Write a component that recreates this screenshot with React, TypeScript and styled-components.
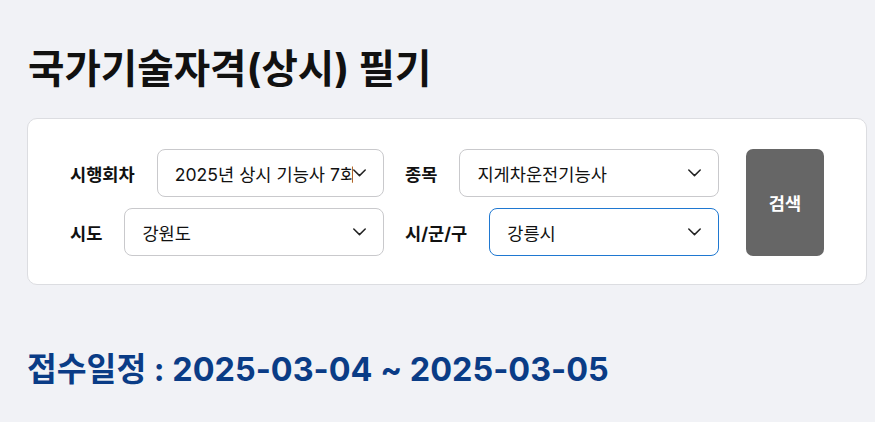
import React from "react";
import styled, { createGlobalStyle } from "styled-components";

const GlobalStyle = createGlobalStyle`
  html, body { margin: 0; padding: 0; background: #f1f2f6; }
  body { font-family: Inter, "Noto Sans CJK KR", sans-serif; color: #111; }
  * { box-sizing: border-box; }
`;

const Page = styled.main`
  padding: 43px 9px 0 27px;
`;

const Title = styled.h1`
  margin: 0 0 0 1px;
  font-size: 39.6px;
  line-height: 52px;
  font-weight: 700;
  color: #111;
  letter-spacing: 0;
`;

const Card = styled.section`
  margin-top: 23px;
  width: 840px;
  background: #fff;
  border: 1px solid #dcdde1;
  border-radius: 10px;
  padding: 30px 41px 28px 42px;
  display: flex;
  align-items: stretch;
  gap: 27px;
`;

const Fields = styled.div`
  display: grid;
  grid-template-columns: 314px 314px;
  column-gap: 21px;
  row-gap: 11px;
`;

const Field = styled.div`
  display: flex;
  align-items: center;
  gap: 22px;
`;

const Label = styled.span`
  font-size: 17.6px;
  font-weight: 700;
  color: #111;
  white-space: nowrap;
`;

const SelectBox = styled.div<{ $focused?: boolean }>`
  flex: 1;
  min-width: 0;
  height: 48px;
  display: flex;
  align-items: center;
  padding: 0 17px 0 17px;
  background: #fff;
  border: 1px solid ${(p) => (p.$focused ? "#1f78d1" : "#c9c9cc")};
  border-radius: 8px;
`;

const SelectText = styled.span`
  flex: 1;
  min-width: 0;
  overflow: hidden;
  white-space: nowrap;
  font-size: 17.6px;
  color: #111;
`;

const Chevron = styled.svg`
  flex: none;
  width: 13px;
  height: 8px;
`;

const SearchButton = styled.button`
  width: 78px;
  border: none;
  border-radius: 7px;
  background: #666666;
  color: #fff;
  font-family: inherit;
  font-size: 17.6px;
  font-weight: 700;
  cursor: pointer;
`;

const Schedule = styled.h2`
  margin: 63px 0 0 0;
  font-size: 32.4px;
  line-height: 44px;
  font-weight: 700;
  color: #0a3c86;
`;

function Select({ value, focused }: { value: string; focused?: boolean }) {
  return (
    <SelectBox $focused={focused}>
      <SelectText>{value}</SelectText>
      <Chevron viewBox="0 0 13 8" fill="none">
        <polyline points="0.8,1 6.5,6.6 12.2,1" stroke="#222" strokeWidth="1.5" strokeLinecap="round" strokeLinejoin="round" />
      </Chevron>
    </SelectBox>
  );
}

export default function App() {
  return (
    <>
      <GlobalStyle />
      <Page>
        <Title>국가기술자격(상시) 필기</Title>
        <Card>
          <Fields>
            <Field>
              <Label>시행회차</Label>
              <Select value="2025년 상시 기능사 7회" />
            </Field>
            <Field>
              <Label>종목</Label>
              <Select value="지게차운전기능사" />
            </Field>
            <Field>
              <Label>시도</Label>
              <Select value="강원도" />
            </Field>
            <Field>
              <Label>시/군/구</Label>
              <Select value="강릉시" focused />
            </Field>
          </Fields>
          <SearchButton type="button">검색</SearchButton>
        </Card>
        <Schedule>접수일정 : 2025-03-04 ~ 2025-03-05</Schedule>
      </Page>
    </>
  );
}
